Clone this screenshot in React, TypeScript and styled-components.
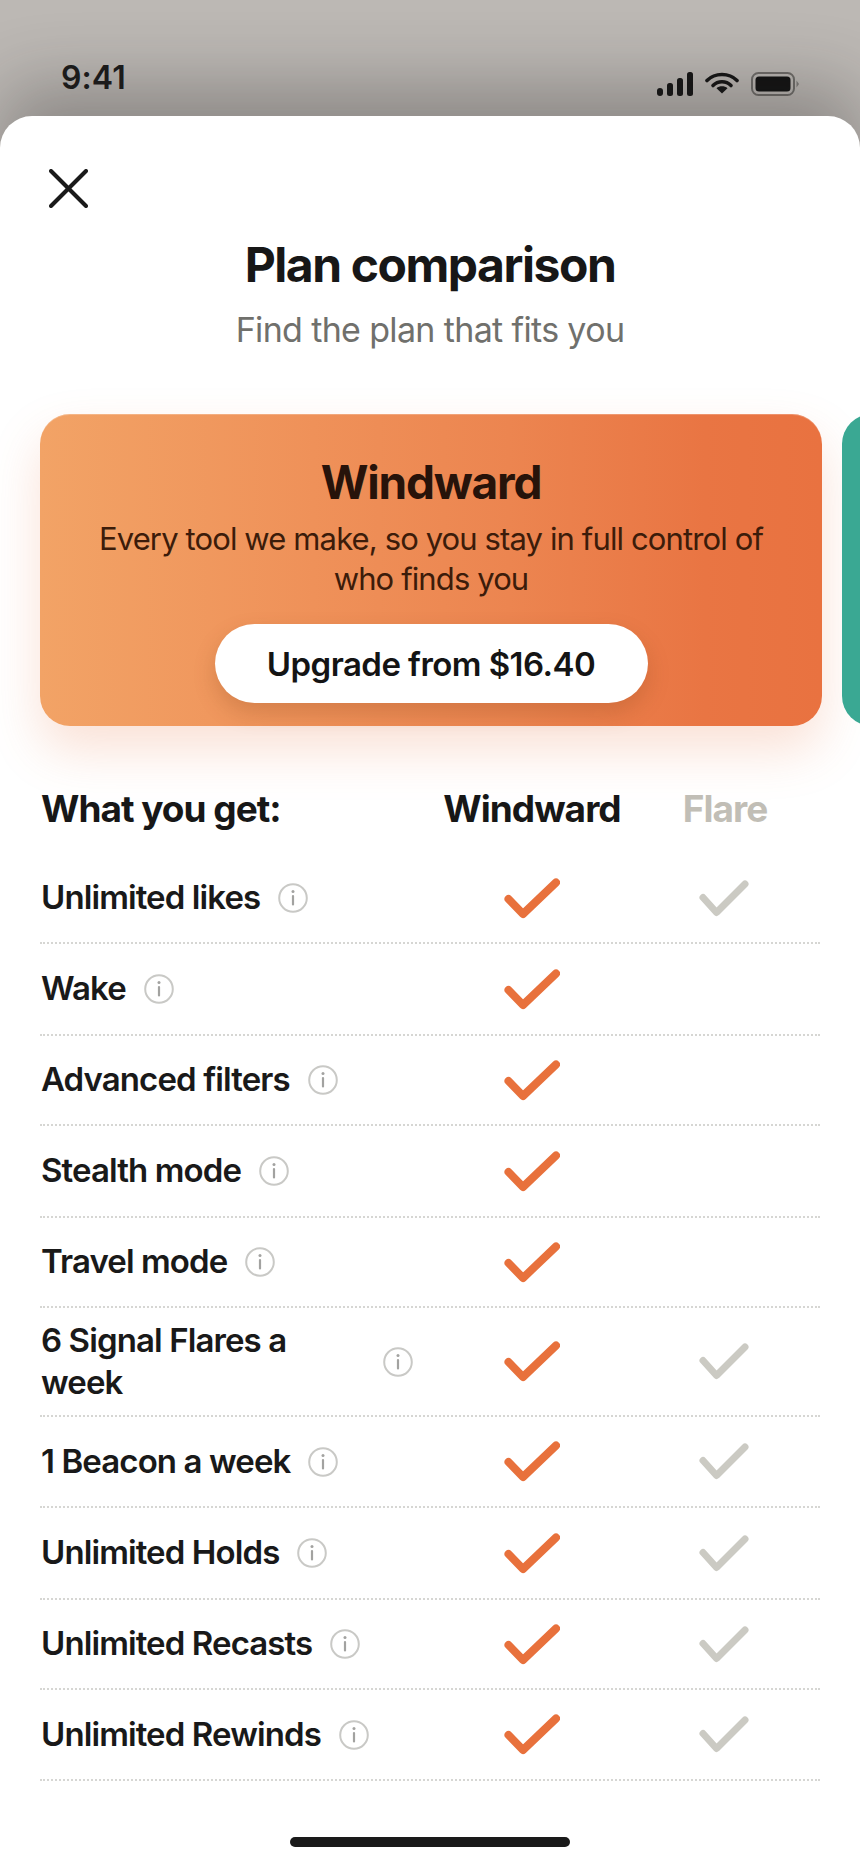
import React from "react";
import styled, { createGlobalStyle } from "styled-components";

const Global = createGlobalStyle`
  html, body { margin: 0; padding: 0; background: #fff; }
  body { font-family: "Inter", "Liberation Sans", sans-serif; -webkit-font-smoothing: antialiased; }
  * { box-sizing: border-box; }
`;

const Page = styled.div`
  width: 860px;
  height: 1864px;
  overflow: hidden;
  display: flex;
  flex-direction: column;
  background: #bcb8b4;
`;

const StatusBar = styled.header`
  height: 116px;
  flex: none;
  padding: 56px 61px 0 61px;
  display: flex;
  justify-content: space-between;
  align-items: flex-start;
`;

const Time = styled.span`
  font-size: 32px;
  line-height: 44px;
  font-weight: 600;
  letter-spacing: 0.1px;
  color: #1c1c1c;
`;

const StatusIcons = styled.div`
  display: flex;
  align-items: flex-start;
  gap: 12px;
  margin: 16px 0 0 0;
`;

const Sheet = styled.main`
  flex: 1;
  background: #fff;
  border-radius: 32px 32px 0 0;
  display: flex;
  flex-direction: column;
  box-shadow: 0 -30px 70px rgba(30, 28, 25, 0.3);
`;

const CloseButton = styled.button`
  align-self: flex-start;
  border: 0;
  background: none;
  padding: 0;
  margin: 53px 0 0 49px;
  width: 39px;
  height: 39px;
  display: block;
`;

const Title = styled.h1`
  margin: 29px 0 0;
  font-size: 48px;
  line-height: 56px;
  font-weight: 700;
  letter-spacing: -1.45px;
  text-align: center;
  color: #171717;
`;

const Subtitle = styled.p`
  margin: 15px 0 0;
  font-size: 34px;
  line-height: 44px;
  font-weight: 400;
  letter-spacing: -0.65px;
  text-align: center;
  color: #70706c;
`;

const Carousel = styled.section`
  display: flex;
  gap: 20px;
  margin: 62px 0 0 40px;
`;

const PlanCard = styled.article`
  flex: none;
  width: 782px;
  height: 312px;
  border-radius: 30px;
  padding: 41px 40px 0;
  display: flex;
  flex-direction: column;
  align-items: center;
  background: linear-gradient(90deg, #f2a366 0%, #ef9159 35%, #ec8550 60%, #e97543 85%, #e97240 100%);
  box-shadow: inset 0 1px 0 rgba(255, 255, 255, 0.22), 0 24px 50px rgba(233, 120, 70, 0.22);
`;

const NextCard = styled.div`
  flex: none;
  width: 782px;
  height: 312px;
  border-radius: 30px;
  background: #3aa893;
`;

const PlanName = styled.h2`
  margin: 0;
  font-size: 46px;
  line-height: 54px;
  font-weight: 700;
  letter-spacing: -1.2px;
  color: #27130a;
`;

const PlanText = styled.p`
  margin: 10px 0 0;
  font-size: 31px;
  line-height: 40px;
  font-weight: 400;
  letter-spacing: -0.88px;
  text-align: center;
  color: #3c1c0a;
`;

const UpgradeButton = styled.button`
  margin-top: 25px;
  width: 433px;
  height: 79px;
  flex: none;
  border: 0;
  border-radius: 40px;
  background: #fff;
  font-family: inherit;
  font-size: 33px;
  font-weight: 600;
  letter-spacing: -0.55px;
  color: #141414;
  box-shadow: 0 10px 22px rgba(120, 60, 20, 0.22);
`;

const Table = styled.section`
  margin: 0 40px;
  display: flex;
  flex-direction: column;
`;

const HeaderRow = styled.div`
  display: grid;
  grid-template-columns: 394px 196px 190px;
  align-items: center;
  height: 128px;
  padding-top: 37px;
`;

const HeaderLabel = styled.span`
  padding-left: 1px;
  font-size: 37px;
  font-weight: 700;
  letter-spacing: -1px;
  color: #171717;
`;

const HeaderPlan = styled.span<{ $muted?: boolean }>`
  text-align: center;
  font-size: 37px;
  font-weight: 700;
  letter-spacing: -0.95px;
  color: ${(p) => (p.$muted ? "#c1beb6" : "#171717")};
`;

const Row = styled.div<{ $height: number }>`
  display: grid;
  grid-template-columns: 394px 196px 190px;
  align-items: center;
  height: ${(p) => p.$height}px;
  border-bottom: 2px dotted #d6d6d3;
`;

const FeatureCell = styled.div`
  display: flex;
  align-items: center;
  gap: 18px;
  padding-left: 1px;
  padding-right: 21px;
`;

const FeatureName = styled.span<{ $wrap?: boolean }>`
  flex: ${(p) => (p.$wrap ? "1" : "none")};
  font-size: 33px;
  line-height: 41.5px;
  font-weight: 600;
  letter-spacing: -0.9px;
  color: #191919;
`;

const CheckCell = styled.div`
  display: flex;
  justify-content: center;
  align-items: center;
`;

const GreyCheckCell = styled(CheckCell)`
  padding-right: 2px;
`;

const HomeBar = styled.div`
  width: 280px;
  height: 10px;
  border-radius: 5px;
  background: #1a1a1a;
  margin: 56px auto 0;
`;

const Signal = () => (
  <svg width="36" height="24" viewBox="0 0 36 24" fill="#161616">
    <rect x="0" y="16" width="6" height="8" rx="3" />
    <rect x="10" y="11" width="6" height="13" rx="2.5" />
    <rect x="20" y="6" width="6" height="18" rx="2.5" />
    <rect x="30" y="0" width="6" height="24" rx="2.5" />
  </svg>
);

const Wifi = () => (
  <svg width="34" height="22" viewBox="0 0 34 22" fill="none" stroke="#161616" strokeWidth="3.6" strokeLinecap="round">
    <path d="M2 8.5C10 0.5 24 0.5 32 8.5" />
    <path d="M8 13.5C13 8.5 21 8.5 26 13.5" />
    <path d="M11.5 16.2 17 21.5 22.5 16.2C19.5 13.6 14.5 13.6 11.5 16.2Z" fill="#161616" stroke="none" />
  </svg>
);

const Battery = () => (
  <svg width="48" height="24" viewBox="0 0 48 24" fill="none">
    <rect x="1" y="1" width="42" height="22" rx="6.5" stroke="#6f6d6a" strokeWidth="2" />
    <rect x="4.5" y="4.5" width="35" height="15" rx="3.5" fill="#131313" />
    <path d="M45.5 8.5 48 12 45.5 15.5Z" fill="#7d7b78" />
  </svg>
);

const CloseIcon = () => (
  <svg width="39" height="39" viewBox="0 0 39 39" fill="none" stroke="#1a1a1a" strokeWidth="4" strokeLinecap="round">
    <path d="M2 2 37 37" />
    <path d="M37 2 2 37" />
  </svg>
);

const InfoIcon = () => (
  <svg width="30" height="30" viewBox="0 0 30 30" fill="none" style={{ flex: "none" }}>
    <circle cx="15" cy="15" r="13.8" stroke="#c9c9c6" strokeWidth="2" />
    <circle cx="15" cy="8.6" r="1.5" fill="#a2a2a0" />
    <rect x="13.9" y="12" width="2.2" height="10.5" rx="1.1" fill="#a2a2a0" />
  </svg>
);

const OrangeCheck = () => (
  <svg width="56" height="41" viewBox="0 0 56 41" fill="none" stroke="#e8713c" strokeWidth="8" strokeLinecap="round" strokeLinejoin="round">
    <path d="M4.5 21 19 36 52 4.5" />
  </svg>
);

const GreyCheck = () => (
  <svg width="50" height="37" viewBox="0 0 50 37" fill="none" stroke="#cbcac3" strokeWidth="7" strokeLinecap="round" strokeLinejoin="round">
    <path d="M4 17.5 17.5 32.5 46 4" />
  </svg>
);

type Feature = { name: string; flare: boolean; height: number; wrap?: boolean };

const features: Feature[] = [
  { name: "Unlimited likes", flare: true, height: 90 },
  { name: "Wake", flare: false, height: 92 },
  { name: "Advanced filters", flare: false, height: 90 },
  { name: "Stealth mode", flare: false, height: 92 },
  { name: "Travel mode", flare: false, height: 90 },
  { name: "6 Signal Flares a week", flare: true, height: 109, wrap: true },
  { name: "1 Beacon a week", flare: true, height: 91 },
  { name: "Unlimited Holds", flare: true, height: 92 },
  { name: "Unlimited Recasts", flare: true, height: 90 },
  { name: "Unlimited Rewinds", flare: true, height: 91 },
];

export default function App() {
  return (
    <Page>
      <Global />
      <StatusBar>
        <Time>9:41</Time>
        <StatusIcons>
          <Signal />
          <Wifi />
          <Battery />
        </StatusIcons>
      </StatusBar>
      <Sheet>
        <CloseButton aria-label="Close">
          <CloseIcon />
        </CloseButton>
        <Title>Plan comparison</Title>
        <Subtitle>Find the plan that fits you</Subtitle>
        <Carousel>
          <PlanCard>
            <PlanName>Windward</PlanName>
            <PlanText>Every tool we make, so you stay in full control of who finds you</PlanText>
            <UpgradeButton>Upgrade from $16.40</UpgradeButton>
          </PlanCard>
          <NextCard />
        </Carousel>
        <Table>
          <HeaderRow>
            <HeaderLabel>What you get:</HeaderLabel>
            <HeaderPlan>Windward</HeaderPlan>
            <HeaderPlan $muted>Flare</HeaderPlan>
          </HeaderRow>
          {features.map((f) => (
            <Row key={f.name} $height={f.height}>
              <FeatureCell>
                <FeatureName $wrap={f.wrap}>{f.name}</FeatureName>
                <InfoIcon />
              </FeatureCell>
              <CheckCell>
                <OrangeCheck />
              </CheckCell>
              <GreyCheckCell>{f.flare && <GreyCheck />}</GreyCheckCell>
            </Row>
          ))}
        </Table>
        <HomeBar />
      </Sheet>
    </Page>
  );
}
